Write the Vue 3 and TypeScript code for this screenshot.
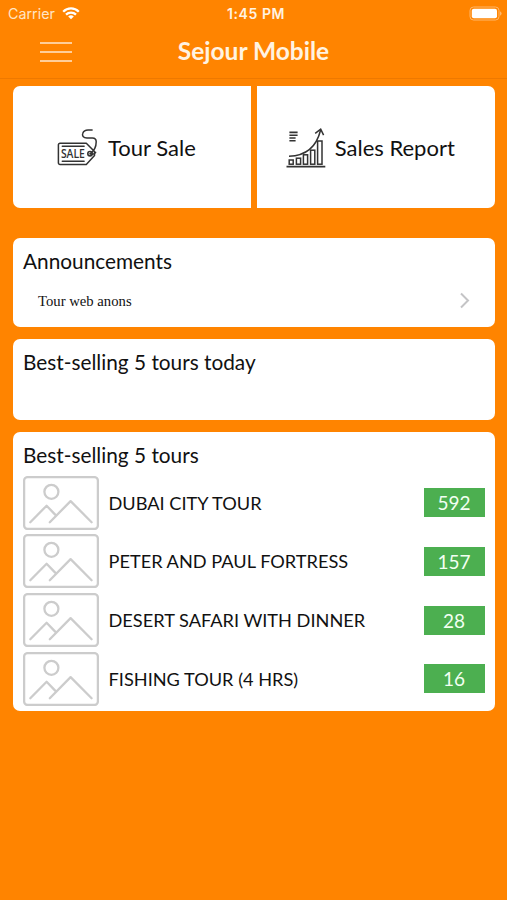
<script setup lang="ts">
interface Tour {
  name: string
  count: number
}

const announcements: string[] = ['Tour web anons']

const tours: Tour[] = [
  { name: 'DUBAI CITY TOUR', count: 592 },
  { name: 'PETER AND PAUL FORTRESS', count: 157 },
  { name: 'DESERT SAFARI WITH DINNER', count: 28 },
  { name: 'FISHING TOUR (4 HRS)', count: 16 },
]
</script>

<template>
  <div class="screen">
    <header class="topbar">
      <div class="status">
        <div class="carrier">
          <span>Carrier</span>
          <svg class="wifi" width="18" height="13" viewBox="0 0 18 13" fill="none" stroke="#fff" stroke-width="2.3">
            <path d="M1.2 4.7a11 11 0 0 1 15.6 0" />
            <path d="M4 7.6a7.1 7.1 0 0 1 10 0" />
            <path d="M9 12.3 6.2 9.5a4 4 0 0 1 5.6 0z" fill="#fff" stroke="none" />
          </svg>
        </div>
        <span class="clock">1:45 PM</span>
        <svg class="battery" width="33" height="15" viewBox="0 0 33 15">
          <rect x="1" y="1" width="29" height="13" rx="3.5" fill="none" stroke="#ffb76b" stroke-width="1" />
          <rect x="2.8" y="2.8" width="25.2" height="9.4" rx="2" fill="#fff" />
          <path d="M31 5.3q1.6.7 1.6 2.2T31 9.7z" fill="#ffb76b" />
        </svg>
      </div>
      <div class="nav">
        <button class="menu" aria-label="Menu"><i></i><i></i><i></i></button>
        <h1>Sejour Mobile</h1>
      </div>
    </header>

    <main>
      <section class="tiles">
        <div class="tile left">
          <svg width="42" height="40" viewBox="0 0 42 40" fill="none" stroke="#333" stroke-width="1.5" stroke-linejoin="round" stroke-linecap="round">
            <path d="M3 15.2h26.3l8.2 8.4v3.8l-8.2 9H3a1.6 1.6 0 0 1-1.6-1.6v-18A1.6 1.6 0 0 1 3 15.2z" />
            <path d="M5.3 18.3h21.8M5.3 33.2h21.8" />
            <circle cx="33" cy="25.7" r="2.2" stroke-width="1.6" />
            <path d="M33.2 25.7c3.6-2.5 6-7.5 6-11.9 0-2.6-1.2-3.8-3.8-3.8h-5.4c-3.8 0-5.2-2.5-4.2-4.8 1-2.6 2.9-3.2 5.2-3.2h4.1" />
            <path d="M33.2 25.7c2.2 1 4 .4 5.4-1.3" />
            <text x="3.9" y="30" textLength="24" lengthAdjust="spacingAndGlyphs">SALE</text>
          </svg>
          <span>Tour Sale</span>
        </div>
        <div class="tile right">
          <svg width="40" height="42" viewBox="0 0 40 42" fill="none" stroke="#333" stroke-width="1.5">
            <path d="M.5 39.6h38.8" stroke-width="1.7" />
            <rect x="3.2" y="33" width="4" height="4.2" />
            <rect x="10.4" y="31.2" width="4.2" height="6" />
            <rect x="17.4" y="27.8" width="4.2" height="9.4" />
            <rect x="24.6" y="23.2" width="4.2" height="14" />
            <rect x="31.6" y="14" width="4.4" height="23.2" />
            <path d="M3 29.3C19 28.8 30.5 20 34.6 3" />
            <path d="m29.2 6.3 5.5-4.1 2.9 5.9" />
            <path d="M3.4 5.4h8.2M3.4 8.2h8.2M3.4 11h6.2M3.4 13.8h6.2" stroke-width="1.6" />
          </svg>
          <span>Sales Report</span>
        </div>
      </section>

      <section class="card announcements">
        <h2>Announcements</h2>
        <div v-for="item in announcements" :key="item" class="announcement">
          <span>{{ item }}</span>
          <svg width="12" height="18" viewBox="0 0 12 18" fill="none" stroke="#c4c4c6" stroke-width="2">
            <path d="m2 2.5 7 7-7 7" />
          </svg>
        </div>
      </section>

      <section class="card today">
        <h2>Best-selling 5 tours today</h2>
      </section>

      <section class="card best">
        <h2>Best-selling 5 tours</h2>
        <ul>
          <li v-for="tour in tours" :key="tour.name">
            <svg class="thumb" width="76" height="54" viewBox="0 0 76 54" fill="none" stroke="#ccc" stroke-width="2.3" stroke-linecap="round" stroke-linejoin="round">
              <rect x="1.1" y="1.1" width="73.8" height="51.8" rx="3.5" />
              <circle cx="28.4" cy="15.8" r="7" />
              <path d="m7.3 46.2 16.3-16.5 8.8 9.2M26.8 46.2l20.8-21.1 21 21.1" />
            </svg>
            <span class="name">{{ tour.name }}</span>
            <span class="count">{{ tour.count }}</span>
          </li>
        </ul>
      </section>
    </main>
  </div>
</template>

<style>
body {
  margin: 0;
  background: #ff8400;
}
</style>

<style scoped>
.screen {
  box-sizing: border-box;
  width: 507px;
  height: 900px;
  overflow: hidden;
  background: #ff8400;
  color: #111;
  font-family: Lato, sans-serif;
}
.topbar {
  box-sizing: border-box;
  height: 79px;
  border-bottom: 1px solid #ee7900;
  color: #fff3e2;
}
.status {
  display: grid;
  grid-template-columns: 1fr auto 1fr;
  align-items: center;
  height: 27px;
  padding: 0 5.5px 0 8px;
  font: 14.3px Inter, sans-serif;
}
.carrier {
  display: flex;
  align-items: center;
  gap: 7px;
  color: #ffe4c6;
}
.clock {
  font-weight: 600;
  font-size: 14px;
  letter-spacing: 0.6px;
  margin-left: 2.5px;
}
.battery {
  justify-self: end;
}
.nav {
  display: grid;
  grid-template-columns: 72px 1fr 72px;
  align-items: center;
  height: 50px;
}
.menu {
  display: flex;
  flex-direction: column;
  gap: 7px;
  width: 32px;
  margin-left: 40px;
  padding: 0;
  border: 0;
  background: none;
}
.menu i {
  height: 2px;
  background: #ffce99;
}
h1 {
  margin: 0 0 2px;
  text-align: center;
  font-size: 24.5px;
  line-height: 30px;
  font-weight: 700;
}
main {
  display: flex;
  flex-direction: column;
  padding: 7.4px 12.5px 0 13px;
}
.tiles {
  display: grid;
  grid-template-columns: 1fr 1fr;
  gap: 6px;
  height: 122px;
  margin-bottom: 29.6px;
}
.tile {
  display: flex;
  align-items: center;
  background: #fff;
  font-size: 22px;
}
.tile svg {
  margin-top: 2px;
}
.left {
  gap: 9px;
  padding-left: 44px;
  border-radius: 7px 0 0 7px;
}
.right {
  gap: 9px;
  padding-left: 29px;
  border-radius: 0 7px 7px 0;
}
.tile text {
  fill: #333;
  stroke: none;
  font: 600 11.6px "Open Sans", sans-serif;
}
.card {
  box-sizing: border-box;
  padding: 8px 10px 0;
  border-radius: 7px;
  background: #fff;
}
h2 {
  margin: 0;
  font-size: 20.8px;
  line-height: 30px;
  font-weight: 400;
}
.announcements {
  height: 89px;
  margin-bottom: 12px;
}
.announcement {
  display: flex;
  align-items: center;
  justify-content: space-between;
  height: 49px;
  padding: 0 13.5px 0 15px;
  font: 14.7px "Liberation Serif", serif;
}
.announcement span {
  padding-top: 2px;
}
.today {
  height: 81px;
  margin-bottom: 12.3px;
}
.best {
  height: 278.4px;
}
ul {
  display: flex;
  flex-direction: column;
  gap: 4.7px;
  margin: 5.5px 0 0;
  padding: 0;
  list-style: none;
}
li {
  display: flex;
  align-items: center;
  height: 54px;
}
.thumb {
  margin-right: 9.5px;
}
.name {
  flex: 1;
  font-size: 18.2px;
}
.count {
  width: 61px;
  height: 29px;
  background: #4caf50;
  color: #f2fff2;
  text-align: center;
  font-size: 19px;
  line-height: 29px;
}
</style>
